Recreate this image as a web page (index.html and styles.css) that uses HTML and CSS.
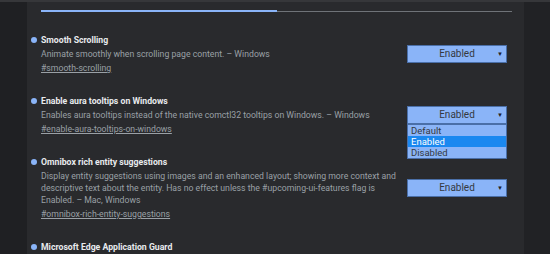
FILE: index.html
```html
<!DOCTYPE html>
<html lang="en">
<head>
  <meta charset="UTF-8" />
  <title>Experiments</title>
  <link rel="stylesheet" href="styles.css">
</head>
<body>
  <div class="page">
    <div class="side"></div>
    <div class="panel">
      <div class="tabs">
        <div class="tab tab-active"></div>
        <div class="tab"></div>
      </div>

      <div class="flag">
        <div class="flag-title"><span class="dot"></span>Smooth Scrolling</div>
        <div class="flag-desc">Animate smoothly when scrolling page content. – Windows</div>
        <div class="flag-select"><div class="select">Enabled<span class="arrow">▼</span></div></div>
        <a class="flag-link" href="#smooth-scrolling">#smooth-scrolling</a>
      </div>

      <div class="flag">
        <div class="flag-title"><span class="dot"></span>Enable aura tooltips on Windows</div>
        <div class="flag-desc">Enables aura tooltips instead of the native comctl32 tooltips on Windows. – Windows</div>
        <div class="flag-select">
          <div class="select select-open">Enabled<span class="arrow">▼</span></div>
          <ul class="options">
            <li>Default</li>
            <li class="option-active">Enabled</li>
            <li>Disabled</li>
          </ul>
        </div>
        <a class="flag-link" href="#enable-aura-tooltips-on-windows">#enable-aura-tooltips-on-windows</a>
      </div>

      <div class="flag">
        <div class="flag-title"><span class="dot"></span>Omnibox rich entity suggestions</div>
        <div class="flag-desc">Display entity suggestions using images and an enhanced layout; showing more context and descriptive text about the entity. Has no effect unless the #upcoming-ui-features flag is Enabled. – Mac, Windows</div>
        <div class="flag-select"><div class="select">Enabled<span class="arrow">▼</span></div></div>
        <a class="flag-link" href="#omnibox-rich-entity-suggestions">#omnibox-rich-entity-suggestions</a>
      </div>

      <div class="flag">
        <div class="flag-title"><span class="dot"></span>Microsoft Edge Application Guard</div>
      </div>
    </div>
    <div class="side side-right"></div>
  </div>
</body>
</html>
```

FILE: styles.css
```css
body {
  margin: 0;
  font-family: Roboto, "Liberation Sans", sans-serif;
  background: #1f2023;
  color: #e8eaed;
  overflow: hidden;
}
.page {
  display: flex;
  height: 254px;
  border-top: 2px solid #36373a;
}
.side {
  width: 27px;
  background: #1f2023;
}
.side-right {
  width: 26px;
  background: #212225;
}
.panel {
  flex: 1;
  background: #292a2d;
  padding: 0 17px 0 14px;
}
.tabs {
  display: flex;
  align-items: flex-end;
  height: 10px;
  margin: 0 -5px 20px 0;
}
.tab {
  flex: 1;
  height: 1px;
  background: #6f7378;
}
.tab-active {
  flex: 0 0 236px;
  height: 2px;
  background: #8ab4f8;
}

.flag {
  display: grid;
  grid-template-columns: 1fr 100px;
  column-gap: 10px;
  margin-bottom: 17px;
}
.flag-title {
  grid-column: 1 / 3;
  position: relative;
  font-size: 8.7px;
  font-weight: bold;
  line-height: 16px;
}
.dot {
  position: absolute;
  left: -10px;
  top: 5px;
  width: 6px;
  height: 6px;
  border-radius: 50%;
  background: #8ab4f8;
}
.flag-desc {
  font-size: 8.7px;
  line-height: 12px;
  color: #9aa0a6;
}
.flag-link {
  grid-column: 1;
  font-size: 8.7px;
  line-height: 16px;
  color: #9aa0a6;
  justify-self: start;
}
.flag-select {
  position: relative;
  align-self: center;
  height: 12px;
}
.select {
  position: relative;
  margin-top: -3px;
  height: 16px;
  border: 1px solid #4a6fa8;
  background: #8ab4f8;
  color: #35393f;
  font-size: 10px;
  line-height: 16px;
  text-align: center;
}
.arrow {
  position: absolute;
  right: 3px;
  top: 0;
  font-size: 6px;
  color: #202124;
}
.options {
  position: absolute;
  left: 0;
  right: 0;
  top: 15px;
  margin: 0;
  padding: 0;
  list-style: none;
  border: 1px solid #4a6fa8;
  background: #8ab4f8;
  color: #35393f;
  font-size: 9.5px;
  line-height: 11px;
  z-index: 2;
}
.options li {
  padding-left: 3px;
}
.option-active {
  background: #1a88f0;
  color: #fff;
}
```
